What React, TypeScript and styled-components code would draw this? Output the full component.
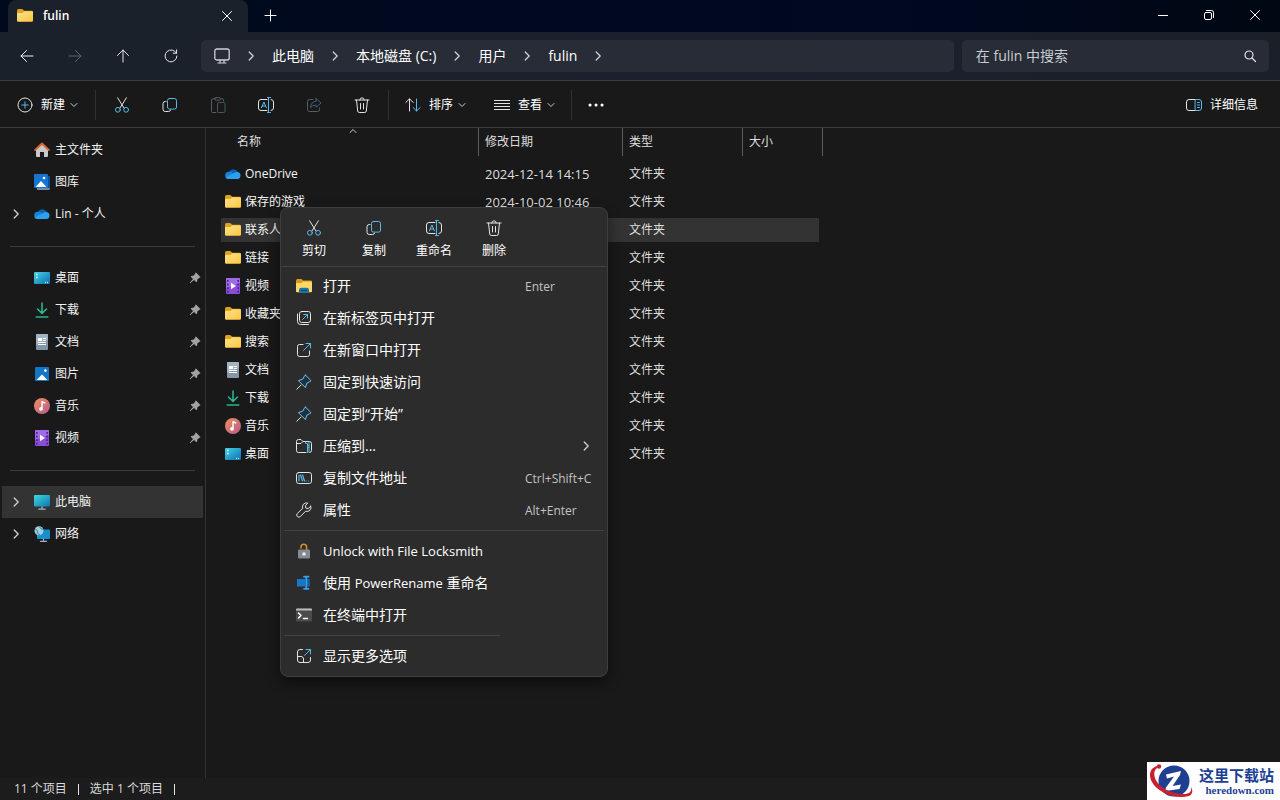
import React, { useId } from "react";
import styled, { createGlobalStyle, css } from "styled-components";

const Global = createGlobalStyle`
  * { box-sizing: border-box; }
  html, body { margin: 0; background: #191919; }
  body, button, input {
    font-family: "Open Sans", "Noto Sans CJK SC", sans-serif;
    font-size: 12px;
    line-height: 16px;
    color: #fff;
  }
  button { background: none; border: 0; padding: 0; margin: 0; }
  svg { display: block; flex: none; }
`;

/* ---------- icons ---------- */

const BLUE = "#5cb8e8";
type SvgProps = { size?: number; children: React.ReactNode; color?: string };
const Svg = ({ size = 16, children, color = "#e4e4e4" }: SvgProps) => (
  <svg width={size} height={size} viewBox="0 0 16 16" fill="none" stroke={color} strokeWidth="1" strokeLinecap="round" strokeLinejoin="round" aria-hidden="true">
    {children}
  </svg>
);

const FolderIcon = () => {
  const id = useId();
  return (
    <Svg>
      <defs>
        <linearGradient id={id} x1="0" y1="0" x2="1" y2="1">
          <stop offset="0" stopColor="#ffe28a" />
          <stop offset="1" stopColor="#fbc640" />
        </linearGradient>
      </defs>
      <path d="M0 2.7Q0 1 1.5 1H5.2L7.2 2.7H14.5Q16 2.7 16 4.2V8H0Z" fill="#dca31d" stroke="none" />
      <path d="M0 5.9Q0 4.900 1 4.900H5.400L7.300 3.300H15Q16 3.300 16 4.300V12.500Q16 13.700 14.800 13.700H1.200Q0 13.700 0 12.500Z" fill={`url(#${id})`} stroke="none" />
    </Svg>
  );
};

const OpenFolderIcon = () => (
  <Svg>
    <path d="M0 2.8Q0 1 1.5 1H5.5L7.2 2.6H14.5Q16 2.6 16 4V8H0Z" fill="#d79a1c" stroke="none" />
    <path d="M0 6Q0 5 1 5H5.4L7.3 3.6H15Q16 3.6 16 4.8V13.2Q16 14.2 15 14.2H1Q0 14.2 0 13.2Z" fill="#ffd867" stroke="none" />
    <path d="M3 14.8V12Q3 9.8 5.2 9.8H10.8Q13 9.8 13 12V14.8Z" fill="#1d76a8" stroke="none" />
    <path d="M5.5 12.5H10.5" stroke="#0b3f68" />
  </Svg>
);

const OneDriveIcon = () => (
  <Svg>
    <path d="M3.8 6.2A5 5 0 0 1 12.8 6.1L8 11 2 10Z" fill="#0f5fb5" stroke="none" />
    <path d="M3.8 13A3.6 3.6 0 0 1 3.8 5.8Q6 5.6 7.6 7L13 10.5 10 13Z" fill="#1583da" stroke="none" />
    <path d="M12.7 6.1A3.5 3.5 0 0 1 12.5 13H3.8Q1.6 13 .7 11.2L8.4 7.4Q10 6 12.7 6.1Z" fill="#2ba0ee" stroke="none" />
  </Svg>
);

const HomeIcon = () => (
  <Svg>
    <path d="M2 6.5 8 1.5 14 6.5V14Q14 15 13 15H10V10H6V15H3Q2 15 2 14Z" fill="#c9c9cb" stroke="none" />
    <path d="M1.2 8 8 1.6 14.8 8" stroke="#d9652e" strokeWidth="2" />
  </Svg>
);

const GalleryIcon = () => (
  <Svg>
    <path d="M3 14H14V2H16V14.6Q16 16 14.6 16H3Z" fill="#6d8ba8" stroke="none" />
    <path d="M14 2H16V14H14Z" fill="#0f4f96" stroke="none" />
    <rect x="0" y="0" width="14" height="14" rx="1" fill="#1673cf" stroke="none" />
    <path d="M1.5 13 7 7 12.5 13Z" fill="#fff" stroke="none" />
    <circle cx="10" cy="4" r="1.3" fill="#fff" stroke="none" />
  </Svg>
);

const PictureIcon = () => (
  <Svg>
    <rect x="1" y="1" width="14" height="14" rx="1" fill="#1576c6" stroke="none" />
    <path d="M2.5 14 8 8.4 13.5 14Z" fill="#fff" stroke="none" />
    <circle cx="11.4" cy="4.6" r="1.3" fill="#fff" stroke="none" />
  </Svg>
);

const DesktopIcon = () => {
  const id = useId();
  return (
    <Svg>
      <defs>
        <linearGradient id={id} x1="0" y1="0" x2="1" y2="1">
          <stop offset="0" stopColor="#44d3ea" />
          <stop offset="1" stopColor="#0b6fb0" />
        </linearGradient>
      </defs>
      <rect x="0" y="2" width="16" height="12" rx="1" fill={`url(#${id})`} stroke="none" />
      <path d="M2 4.5H3.6M2 7.5H3.6M11 12.5h.8M13.2 12.5h.8" stroke="#e9fbff" strokeLinecap="butt" strokeWidth="1.4" />
    </Svg>
  );
};

const DownloadIcon = () => (
  <Svg color="#28b48c">
    <path d="M8 1V11M3.5 7 8 11.4 12.5 7M2.2 15H13.8" strokeWidth="1.6" />
  </Svg>
);

const DocumentIcon = () => (
  <Svg>
    <rect x="2" y="0" width="12" height="16" rx="1" fill="#8296a8" stroke="none" />
    <path d="M2 1Q2 0 3 0H13Q14 0 14 1V6L2 11Z" fill="#a3b3c0" stroke="none" />
    <rect x="4" y="4" width="4" height="3" fill="#fff" stroke="none" />
    <path d="M9 4.5H12M9 6.5H12M4 8.5H12M4 10.5H12" stroke="#fff" strokeLinecap="butt" />
  </Svg>
);

const MusicIcon = () => {
  const id = useId();
  return (
    <Svg>
      <defs>
        <linearGradient id={id} x1="0" y1="0" x2="1" y2="1">
          <stop offset="0" stopColor="#f0905a" />
          <stop offset="1" stopColor="#b65a8e" />
        </linearGradient>
      </defs>
      <circle cx="8" cy="8" r="8" fill={`url(#${id})`} stroke="none" />
      <circle cx="6.9" cy="10.9" r="1.8" fill="#fff" stroke="none" />
      <path d="M8 11V3.6L10.8 5" stroke="#fff" strokeWidth="1.4" />
    </Svg>
  );
};

const VideoIcon = () => (
  <Svg>
    <rect x="1" y="0" width="14" height="16" rx="1" fill="#8a4ed6" stroke="none" />
    <path d="M1 1Q1 0 2 0H14Q15 0 15 1V5L1 10Z" fill="#a06be4" stroke="none" />
    <path d="M2.8 2V15M13.2 2V15" stroke="#4a1f94" strokeWidth="1.6" strokeDasharray="1.8 1.8" strokeLinecap="butt" />
    <path d="M6 4.8 11 8 6 11.2Z" fill="#fff" stroke="none" />
  </Svg>
);

const ComputerIcon = () => {
  const id = useId();
  return (
    <Svg>
      <defs>
        <linearGradient id={id} x1="0" y1="0" x2="1" y2="1">
          <stop offset="0" stopColor="#3ddbd9" />
          <stop offset="1" stopColor="#0d74b8" />
        </linearGradient>
      </defs>
      <rect x="0" y="1" width="16" height="11.5" rx="1" fill={`url(#${id})`} stroke="none" />
      <path d="M8 12.5V15M4.8 15.2H11.2" stroke="#9fb4c2" strokeWidth="1.2" />
    </Svg>
  );
};

const NetworkIcon = () => (
  <Svg>
    <rect x="3" y="3.5" width="13" height="9.5" rx="1" fill="#1590cc" stroke="none" />
    <path d="M9.5 13V15M6.5 15.4H12.5" stroke="#9fb4c2" strokeWidth="1.2" />
    <circle cx="5" cy="4.8" r="4.5" fill="#9fd0e0" stroke="none" />
    <path d="M1.500 3Q4 4 3.500 6T6 9M5.500 1Q6 3 9 3.5" stroke="#3b7f9f" />
  </Svg>
);

const ScissorsIcon = () => (
  <Svg>
    <path d="M3.6.8 10 11M12.4.8 6 11" />
    <circle cx="3.9" cy="12.8" r="2.4" stroke={BLUE} />
    <circle cx="12.1" cy="12.8" r="2.4" stroke={BLUE} />
  </Svg>
);

const CopyIcon = () => (
  <Svg>
    <path d="M4 4.5H3.2Q1 4.5 1 6.7V12.3Q1 14.5 3.2 14.5H6.4Q8.6 14.5 8.6 13" />
    <rect x="5.5" y="1.5" width="9" height="10.6" rx="2" stroke={BLUE} />
  </Svg>
);

const PasteIcon = () => (
  <Svg color="#5c5c5c">
    <path d="M5 1.8H2.5Q1.5 1.8 1.5 2.8V14.5Q1.5 15.5 2.5 15.5H6M11 1.8H12.5Q13.5 1.8 13.5 2.8V4" />
    <rect x="4.8" y=".6" width="5.6" height="2.6" rx="1.2" />
    <rect x="7.5" y="5.5" width="7.5" height="10" rx="1.2" stroke="#3d5c6c" />
  </Svg>
);

const RenameIcon = () => (
  <Svg>
    <path d="M9 2.5H3Q.5 2.5.5 5V11Q.5 13.5 3 13.5H9M13 2.5Q15.5 2.6 15.5 5V11Q15.5 13.4 13 13.5" />
    <path d="M3.4 10.8 5.9 5 8.4 10.8M4.3 9H7.5M9.5.5H12.5M10.500 .5V15.5M9.5 15.5H12.5" stroke={BLUE} />
  </Svg>
);

const ShareIcon = () => (
  <Svg color="#5c5c5c">
    <path d="M7 2.5H3.5Q1.5 2.5 1.5 4.5V12.5Q1.5 14.5 3.5 14.5H11.5Q13.5 14.5 13.5 12.5V11" />
    <path d="M10 1.5 15 6 10 10.3V8Q6.500 7.800 4.500 10.800 5 4.500 10 4.200Z" stroke="#3d6176" />
  </Svg>
);

const TrashIcon = () => (
  <Svg>
    <path d="M1 3H15M5.800 3Q5.800.8 8 .8T10.200 3M2.500 3 3.700 14Q3.900 15.500 5.200 15.500H10.800Q12.100 15.500 12.300 14L13.500 3M6.500 6.500V12M9.500 6.500V12" />
  </Svg>
);

const PlusCircleIcon = () => (
  <Svg>
    <circle cx="8" cy="8" r="7" />
    <path d="M8 4.800V11.200M4.800 8H11.200" stroke={BLUE} />
  </Svg>
);

const SortIcon = () => (
  <Svg>
    <path d="M4.500 14V2M.800 5.500 4.500 1.800 8.200 5.500" />
    <path d="M11.500 2V14M8.200 10.500 11.500 14 15.200 10.500" stroke={BLUE} />
  </Svg>
);

const ListIcon = () => (
  <Svg>
    <path d="M0 3.500H16M0 6.500H16M0 9.500H16M0 12.500H16" strokeLinecap="butt" />
  </Svg>
);

const DetailsIcon = () => (
  <Svg>
    <path d="M9.500 2.500H3Q.5 2.500.5 5V11Q.5 13.500 3 13.500H9.500" />
    <path d="M9.500 2.500H13Q15.500 2.500 15.500 5V11Q15.500 13.500 13 13.500H9.500ZM11.500 5.500H13.500M11.500 8H13.500M11.500 10.500H13.500" stroke={BLUE} />
  </Svg>
);

const Chevron = ({ dir = "right", size = 16 }: { dir?: "right" | "down" | "up"; size?: number }) => {
  const d = { right: "M6.200 4 10.200 8 6.200 12", down: "M4 6 8 10 12 6", up: "M4 10 8 6 12 10" }[dir];
  return (
    <Svg size={size} color="#d0d0d0">
      <path d={d} strokeWidth="1.3" />
    </Svg>
  );
};

const BackIcon = ({ dim = false }: { dim?: boolean }) => (
  <Svg color={dim ? "#5f656e" : "#f0f0f0"}>
    {dim ? <path d="M2 8H14M8.500 2.500 14 8 8.500 13.500" /> : <path d="M14 8H2M7.500 2.500 2 8 7.500 13.500" />}
  </Svg>
);
const UpIcon = () => (
  <Svg>
    <path d="M8 14V2M2.500 7.500 8 2 13.500 7.500" />
  </Svg>
);
const RefreshIcon = () => (
  <Svg>
    <path d="M13.900 8A5.900 5.900 0 1 1 11.500 3.200L13.600 5.200M13.600 1.800V5.200H10.200" />
  </Svg>
);
const MonitorIcon = () => (
  <Svg color="#d0d0d4">
    <rect x=".8" y="1" width="14.400" height="11" rx="2" strokeWidth="1.300" />
    <path d="M6 12V14.500M10 12V14.500M4 15H12" strokeWidth="1.200" />
  </Svg>
);
const SearchIcon = () => (
  <Svg>
    <circle cx="7" cy="7" r="4" strokeWidth="1.200" />
    <path d="M10 10 13.500 13.500" strokeWidth="1.200" />
  </Svg>
);
const CloseIcon = () => (
  <Svg color="#fff">
    <path d="M3.500 3.500 12.500 12.500M12.500 3.500 3.500 12.500" />
  </Svg>
);
const AddIcon = () => (
  <Svg color="#fff">
    <path d="M8.500 3V14M3 8.500H14" />
  </Svg>
);
const MinimizeIcon = () => (
  <Svg color="#fff">
    <path d="M3 8.500H13" strokeLinecap="butt" />
  </Svg>
);
const RestoreIcon = () => (
  <Svg color="#fff">
    <rect x="3.500" y="5.500" width="7" height="7" rx="1.500" />
    <path d="M5.500 3.500H10.500Q12.500 3.500 12.500 5.500V10.500" />
  </Svg>
);
const MoreIcon = () => (
  <Svg color="#fff">
    <path d="M2 8H2.100M8 8H8.100M14 8H14.100" strokeWidth="3" />
  </Svg>
);

const PinFilled = () => (
  <svg width="12" height="12" viewBox="0 0 12 12" aria-hidden="true">
    <path d="M7 .6 11.400 5Q11.400 5.900 10.400 5.800L8.300 7.600Q8.600 9.800 7.400 10.300L5 7.900 1.200 11.300.7 10.800 4 7 1.700 4.700Q2.200 3.500 4.400 3.700L6.200 1.700Q6 .7 7 .6Z" fill="#9fa3a7" />
  </svg>
);
const PinOutline = () => (
  <Svg>
    <path d="M.8 15.200 5 11" />
    <path d="M9.600 1.200 14.800 6.400Q15 7.400 13.800 7.600L10.800 9.200 9.400 13.600 2.400 6.600 6.800 5.200 8.400 2.200Q8.600 1 9.600 1.200Z" stroke="#7cc0e0" fill="#173442" />
  </Svg>
);
const NewTabIcon = () => (
  <Svg>
    <rect x="3.500" y="1.500" width="11" height="11" rx="2.200" />
    <path d="M1.500 4V11.500Q1.500 14.500 4.500 14.500H12.500" />
    <path d="M6.500 9.500 11.500 4.500M7.800 4.500H11.500V8" stroke={BLUE} />
  </Svg>
);
const NewWindowIcon = () => (
  <Svg>
    <path d="M7 2.500H3.500Q1.500 2.500 1.500 4.500V12.500Q1.500 14.500 3.500 14.500H11.500Q13.500 14.500 13.500 12.500V9" />
    <path d="M7.500 8.500 14.500 1.500M10 1.500H14.500V6" stroke={BLUE} />
  </Svg>
);
const ZipIcon = () => (
  <Svg>
    <path d="M10 14.500H2.500Q.5 14.500.5 12.500V3.500Q.5 1.500 2.500 1.500H5L7 3.500H13.500Q15.500 3.500 15.500 5.500V12.500Q15.500 14.500 13.500 14.500M.5 5.500H5L7 3.500" />
    <path d="M9.500 4V5.500H11.500V7.500H13M11.500 7.500V9.500H13M11.500 9.500V14.500M13 4V14.500" stroke={BLUE} />
  </Svg>
);
const CopyPathIcon = () => (
  <Svg>
    <rect x=".5" y="2.500" width="15" height="11" rx="2.200" />
    <path d="M3 5V11M4.500 5 6.500 11M6.500 5 8.500 11M10 11h.1M12.500 11h.1" stroke={BLUE} strokeWidth="1.200" />
  </Svg>
);
const WrenchIcon = () => (
  <Svg>
    <path d="M14.800 4.200 12.200 6.600 9.900 6.100 9.400 3.800 11.800 1.100Q9.500.2 7.500 2.200 5.900 4 6.700 6.200L1.300 11.600Q0 13 1.300 14.500 2.900 15.900 4.300 14.600L9.600 9.200Q12 10 13.800 8.400 15.700 6.400 14.800 4.200Z" />
  </Svg>
);
const LockIcon = () => (
  <Svg>
    <path d="M5 5V4Q5 1.200 7.800 1.200T10.600 4V6.500" stroke="#c7952c" strokeWidth="1.600" />
    <rect x="2" y="6.500" width="12" height="9" rx="1" fill="#858a8f" stroke="none" />
    <circle cx="8" cy="11" r="1.800" fill="#e9eef2" stroke="none" />
  </Svg>
);
const PowerRenameIcon = () => (
  <Svg>
    <rect x="1" y="4" width="8" height="7.500" fill="#1877c9" stroke="none" />
    <rect x="11" y="4" width="3" height="7.500" fill="#125ea5" stroke="none" />
    <path d="M8 1.700H12.500M10.300 1.700V13.800M8 13.800H12.500" stroke="#33a3ec" strokeWidth="1.800" />
  </Svg>
);
const TerminalIcon = () => (
  <Svg>
    <rect x="0" y="1.500" width="16" height="13" rx="1" fill="#4b4b4b" stroke="none" />
    <path d="M0 3.500V2.500Q0 1.500 1 1.500H15Q16 1.500 16 2.500V3.500Z" fill="#bdbdbd" stroke="none" />
    <path d="M2.500 6 5 8.500 2.500 11M7.500 11.500H11.500" stroke="#fff" strokeWidth="1.500" />
  </Svg>
);
const MoreOptionsIcon = () => (
  <Svg>
    <path d="M6.500 1.500H4Q1.500 1.500 1.500 4V12Q1.500 14.500 4 14.500H12Q14.500 14.500 14.500 12V9.500M1.500 8.500H5Q7.500 8.500 7.500 11V14.500" />
    <path d="M8.500 7.500 14.500 1.500M10 1.500H14.500V6" stroke={BLUE} />
  </Svg>
);

/* ---------- window frame ---------- */

const Window = styled.div`
  position: relative;
  display: flex;
  flex-direction: column;
  min-height: 100vh;
  background: #191919;
  overflow: hidden;
`;

const TitleBar = styled.header`
  display: flex;
  height: 32px;
  padding: 0 2px 0 8px;
  background: linear-gradient(90deg, #000a1c, #000822 70%, #000812);
`;

const Tab = styled.div`
  display: flex;
  align-items: center;
  gap: 10px;
  width: 240px;
  padding: 0 12px 0 9px;
  border-radius: 8px 8px 0 0;
  background: #1b212a;
  font-weight: 600;
`;

const Grow = styled.span`
  flex: 1;
`;

const FrameButton = styled.button<{ $w?: number }>`
  display: grid;
  place-items: center;
  width: ${(p) => p.$w ?? 46}px;
  height: 100%;
  padding-bottom: 3px;
`;

const TabClose = styled.button`
  display: grid;
  place-items: center;
  width: 18px;
  height: 18px;
`;

const NavBar = styled.nav`
  display: flex;
  align-items: center;
  height: 49px;
  padding: 0 11px 0 3px;
  background: linear-gradient(90deg, #1b212a, #1c202e 55%, #1b1f28);
  border-bottom: 1px solid #3b3b3c;
`;

const NavButtons = styled.div`
  display: flex;
  margin-right: 6px;
`;

const IconButton = styled.button`
  display: grid;
  place-items: center;
  width: 48px;
  height: 32px;
`;

const Address = styled.ol`
  display: flex;
  align-items: center;
  flex: 1;
  height: 32px;
  margin: 0;
  padding: 0 13px;
  list-style: none;
  border-radius: 5px;
  background: #272c36;
`;

const Crumb = styled.li`
  display: flex;
  align-items: center;
  gap: 13px;
  margin-right: 13px;
`;

const CrumbLink = styled.a`
  color: #fff;
  font-size: 14px;
  line-height: 20px;
  text-decoration: none;
  white-space: nowrap;
`;

const SearchBox = styled.label`
  display: flex;
  align-items: center;
  width: 24vw;
  height: 32px;
  margin-left: 8px;
  padding: 0 11px 0 14px;
  border-radius: 5px;
  background: #272c36;
`;

const SearchInput = styled.input`
  flex: 1;
  min-width: 0;
  padding: 0;
  border: 0;
  outline: 0;
  background: none;
  font-size: 14px;
  line-height: 20px;
  &::placeholder { color: #c9ccd2; opacity: 1; }
`;

const CommandBar = styled.div`
  display: flex;
  align-items: center;
  height: 47px;
  padding: 2px 22px 0 17px;
  border-bottom: 1px solid #3b3b3c;
`;

const CommandButton = styled.button`
  display: flex;
  align-items: center;
  gap: 8px;
  white-space: nowrap;
`;

const CommandGroup = styled.div`
  display: flex;
  gap: 26px;
`;

const LabelWithChevron = styled.span`
  display: flex;
  align-items: center;
  gap: 3px;
`;

const Divider = styled.span<{ $l?: number; $r?: number }>`
  width: 1px;
  height: 30px;
  margin-left: ${(p) => p.$l ?? 0}px;
  margin-right: ${(p) => p.$r ?? 0}px;
  background: #303030;
`;

const Body = styled.div`
  display: flex;
  flex: 1;
`;

/* ---------- side bar ---------- */

const Sidebar = styled.aside`
  width: 206px;
  padding: 6px 2px 0;
  border-right: 1px solid #333;
`;

const NavItem = styled.a<{ $selected?: boolean }>`
  display: flex;
  align-items: center;
  height: 32px;
  padding: 0 2px 0 6px;
  color: #f2f2f2;
  text-decoration: none;
  ${(p) => p.$selected && css`background: #333;`}
`;

const ChevronSlot = styled.span`
  width: 26px;
`;

const NavLabel = styled.span`
  flex: 1;
  margin-left: 5px;
`;

const Rule = styled.hr`
  height: 1px;
  margin: 16px 8px 15px;
  border: 0;
  background: #3a3a3a;
`;

/* ---------- file table ---------- */

const Content = styled.main`
  flex: 1;
  padding-left: 15px;
`;

const Table = styled.table`
  display: block;
  width: 602px;
`;

const gridRow = css`
  display: grid;
  grid-template-columns: 258px 144px 120px 80px;
  align-items: center;
`;

const HeadRow = styled.tr`
  ${gridRow}
  height: 28px;
`;

const HeadCell = styled.th<{ $indent?: number }>`
  position: relative;
  height: 28px;
  padding: 6px 0 0 ${(p) => p.$indent ?? 6}px;
  border-right: 1px solid #5c5c5c;
  text-align: left;
  font-weight: 400;
  color: #dedede;
`;

const SortMark = styled.span`
  position: absolute;
  top: -3px;
  left: 49%;
`;

const Rows = styled.tbody`
  display: flex;
  flex-direction: column;
  gap: 4px;
  padding-top: 6px;
`;

const FileRow = styled.tr<{ $selected?: boolean }>`
  ${gridRow}
  height: 24px;
  margin-right: 4px;
  ${(p) => p.$selected && css`background: #333;`}
`;

const Cell = styled.td`
  padding: 0 0 0 6px;
  color: #dedede;
  white-space: nowrap;
`;

const DateCell = styled(Cell)`
  font-size: 13px;
`;

const NameCell = styled(Cell)`
  display: flex;
  align-items: center;
  gap: 4px;
  padding-left: 4px;
  color: #f4f4f4;
`;

/* ---------- context menu ---------- */

const Menu = styled.div`
  position: absolute;
  top: 207px;
  left: 280px;
  width: 328px;
  border: 1px solid #3e3e3e;
  border-radius: 8px;
  background: #2c2c2c;
  box-shadow: 0 6px 14px rgba(0, 0, 0, 0.45);
`;

const QuickActions = styled.div`
  display: flex;
  height: 59px;
  padding: 12px 0 0 3px;
  border-bottom: 1px solid #404040;
`;

const QuickAction = styled.button`
  display: flex;
  flex-direction: column;
  align-items: center;
  gap: 7px;
  width: 60px;
  height: 40px;
`;

const MenuGroup = styled.div<{ $first?: boolean }>`
  padding: ${(p) => (p.$first ? 3 : 4)}px 0 4px;
`;

const MenuLine = styled.hr<{ $short?: boolean }>`
  height: 1px;
  width: ${(p) => (p.$short ? 216 : 320)}px;
  margin: 0 3px;
  border: 0;
  background: #434343;
`;

const MenuItem = styled.button`
  display: flex;
  align-items: center;
  width: 100%;
  height: 32px;
  padding: 0 13px 0 15px;
  font-size: 14px;
  line-height: 20px;
  text-align: left;
`;

const MenuLabel = styled.span`
  flex: 1;
  margin-left: 11px;
  white-space: nowrap;
`;

const Latin = styled.span`
  font-size: 13px;
`;

const Shortcut = styled.kbd`
  width: 69px;
  padding-top: 1px;
  font-family: inherit;
  font-size: 12px;
  line-height: 16px;
  color: #c4c4c4;
  white-space: nowrap;
`;

/* ---------- footer ---------- */

const StatusBar = styled.footer`
  display: flex;
  align-items: center;
  height: 22px;
  padding-left: 14px;
  background: #1c1c1c;
  color: #dadada;
`;

const StatusTick = styled.span`
  width: 1px;
  height: 11px;
  margin: 0 11px;
  background: #e6e6e6;
`;

const Watermark = styled.div`
  position: absolute;
  right: 0;
  bottom: 0;
  display: flex;
  align-items: center;
  gap: 4px;
  width: 133px;
  height: 38px;
  background: #fff;
  color: #1c3f94;
`;

const WatermarkText = styled.div`
  display: flex;
  flex-direction: column;
  align-items: flex-end;
`;

const WatermarkName = styled.strong`
  font-family: "Noto Sans CJK SC", sans-serif;
  font-size: 15px;
  font-weight: 700;
  line-height: 18px;
`;

const WatermarkUrl = styled.span`
  font-family: "Liberation Serif", serif;
  font-size: 11px;
  font-weight: 700;
  line-height: 12px;
`;

/* ---------- data ---------- */

type Place = { label: string; Icon: React.FC; expand?: boolean; pin?: boolean; selected?: boolean };

const places: Place[][] = [
  [
    { label: "主文件夹", Icon: HomeIcon },
    { label: "图库", Icon: GalleryIcon },
    { label: "Lin - 个人", Icon: OneDriveIcon, expand: true },
  ],
  [
    { label: "桌面", Icon: DesktopIcon, pin: true },
    { label: "下载", Icon: DownloadIcon, pin: true },
    { label: "文档", Icon: DocumentIcon, pin: true },
    { label: "图片", Icon: PictureIcon, pin: true },
    { label: "音乐", Icon: MusicIcon, pin: true },
    { label: "视频", Icon: VideoIcon, pin: true },
  ],
  [
    { label: "此电脑", Icon: ComputerIcon, expand: true, selected: true },
    { label: "网络", Icon: NetworkIcon, expand: true },
  ],
];

const files: { name: string; Icon: React.FC; date?: string; selected?: boolean }[] = [
  { name: "OneDrive", Icon: OneDriveIcon, date: "2024-12-14 14:15" },
  { name: "保存的游戏", Icon: FolderIcon, date: "2024-10-02 10:46" },
  { name: "联系人", Icon: FolderIcon, selected: true },
  { name: "链接", Icon: FolderIcon },
  { name: "视频", Icon: VideoIcon },
  { name: "收藏夹", Icon: FolderIcon },
  { name: "搜索", Icon: FolderIcon },
  { name: "文档", Icon: DocumentIcon },
  { name: "下载", Icon: DownloadIcon },
  { name: "音乐", Icon: MusicIcon },
  { name: "桌面", Icon: DesktopIcon },
];

const quick = [
  { label: "剪切", Icon: ScissorsIcon },
  { label: "复制", Icon: CopyIcon },
  { label: "重命名", Icon: RenameIcon },
  { label: "删除", Icon: TrashIcon },
];

const menu: { label: React.ReactNode; Icon: React.FC; keys?: string; sub?: boolean }[][] = [
  [
    { label: "打开", Icon: OpenFolderIcon, keys: "Enter" },
    { label: "在新标签页中打开", Icon: NewTabIcon },
    { label: "在新窗口中打开", Icon: NewWindowIcon },
    { label: "固定到快速访问", Icon: PinOutline },
    { label: "固定到“开始”", Icon: PinOutline },
    { label: "压缩到...", Icon: ZipIcon, sub: true },
    { label: "复制文件地址", Icon: CopyPathIcon, keys: "Ctrl+Shift+C" },
    { label: "属性", Icon: WrenchIcon, keys: "Alt+Enter" },
  ],
  [
    { label: <Latin>Unlock with File Locksmith</Latin>, Icon: LockIcon },
    { label: <>使用 <Latin>PowerRename</Latin> 重命名</>, Icon: PowerRenameIcon },
    { label: "在终端中打开", Icon: TerminalIcon },
  ],
  [{ label: "显示更多选项", Icon: MoreOptionsIcon }],
];

export default function App() {
  return (
    <Window>
      <Global />
      <TitleBar>
        <Tab>
          <FolderIcon />
          <span>fulin</span>
          <Grow />
          <TabClose aria-label="关闭标签页"><CloseIcon /></TabClose>
        </Tab>
        <FrameButton $w={44} aria-label="新标签页"><AddIcon /></FrameButton>
        <Grow />
        <FrameButton aria-label="最小化"><MinimizeIcon /></FrameButton>
        <FrameButton aria-label="还原"><RestoreIcon /></FrameButton>
        <FrameButton aria-label="关闭"><CloseIcon /></FrameButton>
      </TitleBar>

      <NavBar>
        <NavButtons>
          <IconButton aria-label="后退"><BackIcon /></IconButton>
          <IconButton aria-label="前进" disabled><BackIcon dim /></IconButton>
          <IconButton aria-label="向上"><UpIcon /></IconButton>
          <IconButton aria-label="刷新"><RefreshIcon /></IconButton>
        </NavButtons>
        <Address>
          <Crumb>
            <MonitorIcon />
            <Chevron />
          </Crumb>
          {["此电脑", "本地磁盘 (C:)", "用户", "fulin"].map((c) => (
            <Crumb key={c}>
              <CrumbLink href="#">{c}</CrumbLink>
              <Chevron />
            </Crumb>
          ))}
        </Address>
        <SearchBox>
          <SearchInput type="text" placeholder="在 fulin 中搜索" aria-label="搜索" />
          <SearchIcon />
        </SearchBox>
      </NavBar>

      <CommandBar>
        <CommandButton>
          <PlusCircleIcon />
          <LabelWithChevron>新建<Chevron dir="down" size={12} /></LabelWithChevron>
        </CommandButton>
        <Divider $l={15} $r={2} />
        <IconButton aria-label="剪切"><ScissorsIcon /></IconButton>
        <IconButton aria-label="复制"><CopyIcon /></IconButton>
        <IconButton aria-label="粘贴" disabled><PasteIcon /></IconButton>
        <IconButton aria-label="重命名"><RenameIcon /></IconButton>
        <IconButton aria-label="共享" disabled><ShareIcon /></IconButton>
        <IconButton aria-label="删除"><TrashIcon /></IconButton>
        <Divider $l={2} $r={16} />
        <CommandGroup>
          <CommandButton>
            <SortIcon />
            <LabelWithChevron>排序<Chevron dir="down" size={12} /></LabelWithChevron>
          </CommandButton>
          <CommandButton>
            <ListIcon />
            <LabelWithChevron>查看<Chevron dir="down" size={12} /></LabelWithChevron>
          </CommandButton>
        </CommandGroup>
        <Divider $l={14} />
        <IconButton aria-label="查看更多"><MoreIcon /></IconButton>
        <Grow />
        <CommandButton>
          <DetailsIcon />
          详细信息
        </CommandButton>
      </CommandBar>

      <Body>
        <Sidebar>
          {places.map((group, g) => (
            <React.Fragment key={g}>
              {g > 0 && <Rule />}
              {group.map(({ label, Icon, expand, pin, selected }) => (
                <NavItem key={label} href="#" $selected={selected}>
                  <ChevronSlot>{expand && <Chevron />}</ChevronSlot>
                  <Icon />
                  <NavLabel>{label}</NavLabel>
                  {pin && <PinFilled />}
                </NavItem>
              ))}
            </React.Fragment>
          ))}
        </Sidebar>

        <Content>
          <Table cellSpacing={0}>
            <thead>
              <HeadRow>
                <HeadCell $indent={16}>
                  名称
                  <SortMark><Chevron dir="up" size={12} /></SortMark>
                </HeadCell>
                <HeadCell>修改日期</HeadCell>
                <HeadCell>类型</HeadCell>
                <HeadCell>大小</HeadCell>
              </HeadRow>
            </thead>
            <Rows>
              {files.map(({ name, Icon, date, selected }) => (
                <FileRow key={name} $selected={selected}>
                  <NameCell><Icon />{name}</NameCell>
                  <DateCell>{date}</DateCell>
                  <Cell>文件夹</Cell>
                </FileRow>
              ))}
            </Rows>
          </Table>
        </Content>
      </Body>

      <StatusBar>
        <span>11 个项目</span>
        <StatusTick />
        <span>选中 1 个项目</span>
        <StatusTick />
      </StatusBar>

      <Menu role="menu">
        <QuickActions>
          {quick.map(({ label, Icon }) => (
            <QuickAction key={label} role="menuitem"><Icon />{label}</QuickAction>
          ))}
        </QuickActions>
        {menu.map((group, g) => (
          <React.Fragment key={g}>
            {g > 0 && <MenuLine $short={g === 2} />}
            <MenuGroup $first={g === 0}>
              {group.map(({ label, Icon, keys, sub }, i) => (
                <MenuItem key={i} role="menuitem">
                  <Icon />
                  <MenuLabel>{label}</MenuLabel>
                  {keys && <Shortcut>{keys}</Shortcut>}
                  {sub && <Chevron />}
                </MenuItem>
              ))}
            </MenuGroup>
          </React.Fragment>
        ))}
      </Menu>

      <Watermark>
        <svg width="48" height="38" viewBox="0 0 48 38" aria-hidden="true">
          <circle cx="27" cy="19" r="15.500" fill="#1f3f93" />
          <path d="M19 12.500 34 9 33 13 25.500 24 34 22.500 32.500 27 18 29 19 25.500 27 14.500 20 16.500Z" fill="#fff" />
          <path d="M14 3.500C3 4 1 12 5 20 10 30 28 38 42 34 46 32 46 28 44 25 45 30 42 32 37 32 24 32 11 25 8 16 6 10 8 6 14 3.500Z" fill="#c8202f" />
          <circle cx="12" cy="4.500" r="2.200" fill="#c8202f" />
        </svg>
        <WatermarkText>
          <WatermarkName>这里下载站</WatermarkName>
          <WatermarkUrl>heredown.com</WatermarkUrl>
        </WatermarkText>
      </Watermark>
    </Window>
  );
}
